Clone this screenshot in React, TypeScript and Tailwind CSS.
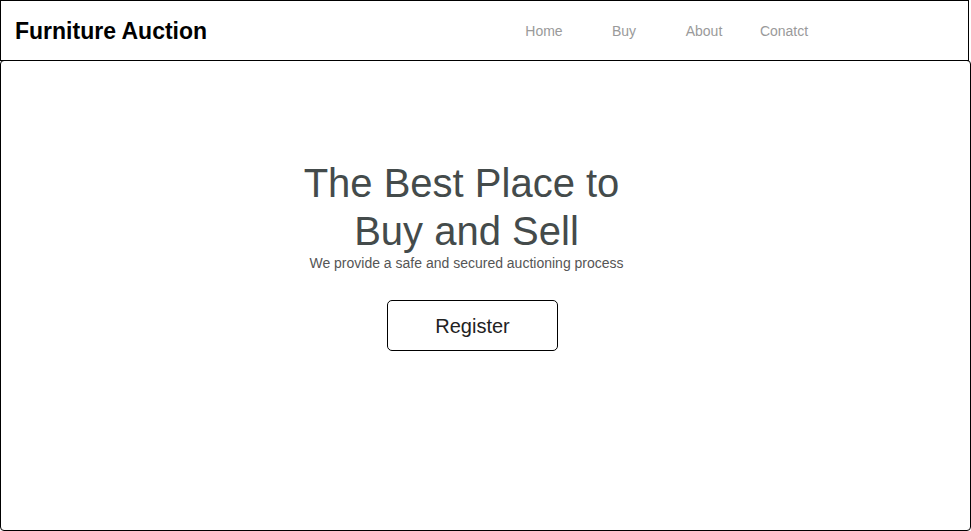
const navItems = ['Home', 'Buy', 'About', 'Conatct'];

const App = () => {
  return (
    <div className="w-[971px] h-[531px] bg-white font-['Liberation_Sans',Arial,sans-serif]">
      <header className="w-[969px] h-[61px] border border-black flex items-center justify-between">
        <div className="pl-[14px] pt-px text-[23px] font-bold text-black">Furniture Auction</div>
        <nav className="flex mr-[144px] pt-[2px]">
          {navItems.map((item) => (
            <a key={item} href="#" className="w-[80px] text-center text-[14px] text-[#9a9a9a]">
              {item}
            </a>
          ))}
        </nav>
      </header>

      <main className="h-[471px] -mt-px border border-black rounded-[4px] flex flex-col items-center pt-[98px] pr-[38px]">
        <h1 className="text-[40px] leading-[48px] text-center text-[#444b4b]">
          <span className="block pr-[10px]">The Best Place to</span>
          <span className="block">Buy and Sell</span>
        </h1>
        <p className="text-[14px] leading-[20px] text-[#555555] -mt-[2px]">We provide a safe and secured auctioning process</p>
        <button className="mt-[27px] ml-[12px] w-[171px] h-[51px] border border-black rounded-[5px] text-[20px] text-[#222222]">
          Register
        </button>
      </main>
    </div>
  );
};

export default App;
